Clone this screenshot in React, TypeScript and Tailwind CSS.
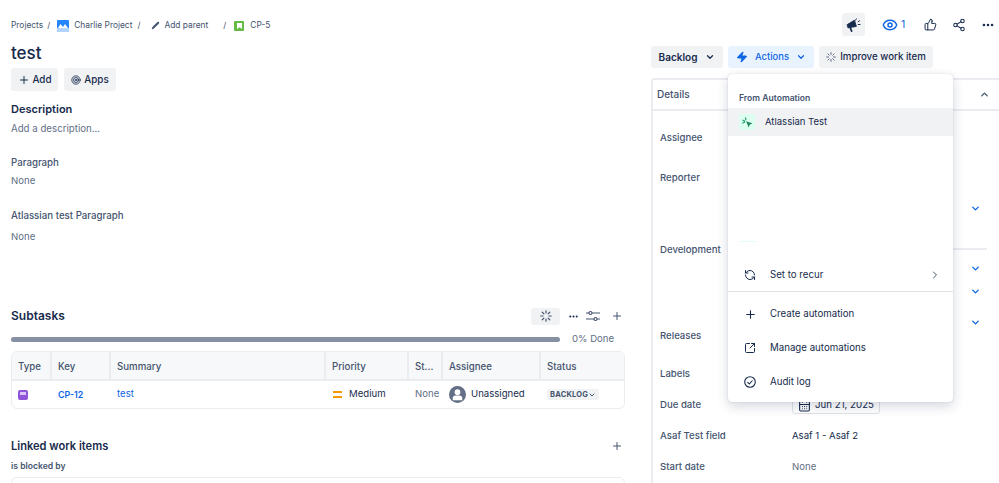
import React from "react";
import { Plus, ChevronDown, ChevronUp, ChevronRight, Eye, ThumbsUp, Share2, MoreHorizontal, Zap, RefreshCcw, SquareArrowOutUpRight, CalendarDays, Pencil, Target } from "lucide-react";

const Spark = ({ size = 12, color = "#44546f" }: { size?: number; color?: string }) => (
  <svg width={size} height={size} viewBox="0 0 16 16" fill="none" stroke={color} strokeWidth="1.6" strokeLinecap="round">
    <path d="M8 1v3M8 12v3M1 8h3M12 8h3M3 3l2.2 2.200M10.800 10.800 13 13M13 3l-2.200 2.200M5.200 10.800 3 13" />
  </svg>
);

const Label = ({ children }: { children: React.ReactNode }) => (
  <div className="text-[9.6px] leading-[14px] font-medium whitespace-nowrap text-[#44546f]">{children}</div>
);

const Row = ({ name, h, value }: { name: string; h: string; value?: React.ReactNode }) => (
  <div className={`grid grid-cols-[132px_1fr] items-start ${h}`}>
    <Label>{name}</Label>
    {value}
  </div>
);

const Th = ({ children, last }: { children: React.ReactNode; last?: boolean }) => (
  <div className={`flex h-full items-center truncate pl-[6px] pt-[3px] text-[9.7px] font-medium text-[#44546f] ${last ? "" : "border-r-2 border-[#ebecf0]"}`}>{children}</div>
);

const MenuItem = ({ icon, label, right, h = "h-[34px]", pt = "" }: { icon: React.ReactNode; label: string; right?: React.ReactNode; h?: string; pt?: string }) => (
  <div className={`flex items-center pl-[16px] pr-[12px] text-[9.7px] text-[#172b4d] ${h}`}>
    <span className="flex w-[26px] items-center text-[#172b4d]">{icon}</span>
    <span className={`flex-1 ${pt}`}>{label}</span>
    {right}
  </div>
);

const Chev = ({ className }: { className: string }) => (
  <ChevronDown size={11} strokeWidth={3} className={`text-[#0c66e4] ${className}`} />
);

export default function App() {
  return (
    <div className="relative h-[483px] w-[999px] overflow-hidden bg-white text-[#172b4d]" style={{ fontFamily: "Inter, 'Noto Sans', sans-serif" }}>
      <div className="flex">
        {/* Left column */}
        <div className="w-[651px] shrink-0 pl-[11px] pr-[26px]">
          <div className="flex h-[50px] items-center pt-[1px] text-[8.4px] text-[#44546f]">
            <span>Projects</span>
            <span className="ml-[4px]">/</span>
            <span className="ml-[7px] flex h-[12px] w-[12px] overflow-hidden rounded-[1px]">
              <svg width="12" height="12" viewBox="0 0 12 12"><rect width="12" height="12" fill="#2684ff" /><path d="M1 8l2.500-4L6 7l2-3 3 4v4H1z" fill="#fff" /><rect y="8" width="12" height="4" fill="#b3d4ff" /></svg>
            </span>
            <span className="ml-[5px]">Charlie Project</span>
            <span className="ml-[5px]">/</span>
            <Pencil size={9} strokeWidth={0} fill="#44546f" className="ml-[11px]" />
            <span className="ml-[4px]">Add parent</span>
            <span className="ml-[15px]">/</span>
            <span className="ml-[8px] flex h-[10px] w-[10px] items-center justify-center rounded-[1px] bg-[#65ba43]">
              <svg width="5" height="6" viewBox="0 0 6 7"><path d="M0 0h6v7L3 5 0 7z" fill="#fff" /></svg>
            </span>
            <span className="ml-[6px]">CP-5</span>
          </div>
          <h1 className="h-[18px] text-[17px] leading-[7px] font-medium text-[#172b4d]">test</h1>
          <div className="flex gap-[6px]">
            <button className="flex h-[23px] w-[47px] items-center justify-center gap-[3px] rounded-[3px] bg-[#f1f2f4] text-[9.8px] font-medium text-[#172b4d]">
              <Plus size={12} /><span className="pt-[1px]">Add</span>
            </button>
            <button className="flex h-[23px] w-[52px] items-center justify-center gap-[3px] rounded-[3px] bg-[#f1f2f4] text-[9.8px] font-medium text-[#172b4d]">
              <Target size={10} /><span className="pt-[1px]">Apps</span>
            </button>
          </div>
          <div className="mt-[11px] text-[11px] leading-[15px] font-semibold">Description</div>
          <div className="mt-[5px] text-[9.7px] leading-[14px] text-[#626f86]">Add a description...</div>

          <div className="mt-[20px] text-[9.7px] leading-[14px] font-medium text-[#44546f]">Paragraph</div>
          <div className="mt-[4px] text-[9.6px] leading-[14px] text-[#626f86]">None</div>
          <div className="mt-[21px] text-[9.7px] leading-[14px] font-medium text-[#44546f]">Atlassian test Paragraph</div>
          <div className="mt-[7px] text-[9.6px] leading-[14px] text-[#626f86]">None</div>

          <div className="mt-[60px] flex h-[24px] items-center">
            <div className="flex-1 text-[12px] font-semibold">Subtasks</div>
            <div className="flex h-[17px] w-[29px] items-center justify-center rounded-[3px] bg-[#f1f2f4]"><Spark size={12} /></div>
            <MoreHorizontal size={11} strokeWidth={2.5} className="ml-[8px]" />
            <svg width="14" height="12" viewBox="0 0 14 12" fill="none" stroke="#44546f" strokeWidth="1.200" className="ml-[7px]">
              <path d="M0 3h3M6 3h8M0 9h8M11 9h3" /><circle cx="4.500" cy="3" r="1.500" /><circle cx="9.500" cy="9" r="1.500" />
            </svg>
            <Plus size={12} className="ml-[11px] mr-[2px] text-[#44546f]" />
          </div>
          <div className="mt-[6px] flex h-[10px] items-center">
            <div className="h-[5px] w-[549px] rounded-full bg-[#8590a2]" />
            <div className="ml-[12px] text-[9.600px] text-[#626f86]">0% Done</div>
          </div>
          <div className="mt-[7px] h-[58px] overflow-hidden rounded-[6px] border border-[#ebecf0] text-[9.600px]">
            <div className="grid h-[29px] grid-cols-[40px_59px_215px_83px_34px_98px_1fr] items-center border-b-2 border-[#ebecf0] bg-[#f7f8f9]">
              <Th>Type</Th><Th>Key</Th><Th>Summary</Th><Th>Priority</Th><Th>St...</Th><Th>Assignee</Th><Th last>Status</Th>
            </div>
            <div className="grid h-[27px] grid-cols-[40px_59px_215px_83px_34px_98px_1fr] items-center">
              <div className="pl-[6px]">
                <div className="flex h-[10px] w-[10px] items-start justify-center rounded-[2px] bg-[#8f55d8] pt-[2px]"><div className="h-[3px] w-[6px] bg-[#d9c5f5]" /></div>
              </div>
              <div className="pl-[6px] text-[8.800px] font-semibold text-[#0c66e4]">CP-12</div>
              <div className="pl-[6px] text-[#0c66e4]">test</div>
              <div className="flex items-center pl-[7px]">
                <div className="flex h-[7px] w-[9px] flex-col justify-between"><div className="h-[2px] bg-[#f79a00]" /><div className="h-[2px] bg-[#f79a00]" /></div>
                <span className="ml-[7px] text-[#172b4d]">Medium</span>
              </div>
              <div className="pl-[6px] text-[#626f86]">None</div>
              <div className="flex items-center pl-[6px]">
                <svg width="17" height="17" viewBox="0 0 18 18"><circle cx="9" cy="9" r="9" fill="#626f86" /><circle cx="9" cy="6.500" r="3" fill="#fff" /><path d="M4 15v-2a3 3 0 0 1 3-3h4a3 3 0 0 1 3 3v2z" fill="#fff" /></svg>
                <span className="ml-[5px] text-[#172b4d]">Unassigned</span>
              </div>
              <div className="pl-[6px]">
                <div className="flex h-[11px] w-[52px] items-center justify-center rounded-[2px] bg-[#f1f2f4] text-[7.500px] font-bold tracking-[0.2px] text-[#44546f]">BACKLOG<ChevronDown size={8} strokeWidth={3} /></div>
              </div>
            </div>
          </div>
          <div className="mt-[27px] flex h-[20px] items-center">
            <div className="flex-1 text-[11.100px] font-semibold">Linked work items</div>
            <Plus size={12} className="mr-[2px] text-[#44546f]" />
          </div>
          <div className="mt-[3px] text-[8.600px] leading-[14px] font-semibold text-[#44546f]">is blocked by</div>
          <div className="mt-[4px] h-[20px] rounded-[6px] border border-[#ebecf0]" />
        </div>

        {/* Right column */}
        <div className="flex-1">
          <div className="flex h-[46px] items-start pt-[13px]">
            <div className="ml-[191px] flex h-[23px] w-[23px] items-center justify-center rounded-[3px] bg-[#f1f2f4]">
              <svg width="15" height="15" viewBox="0 0 16 16" fill="#172b4d" stroke="#172b4d" strokeWidth="1" strokeLinecap="round">
                <path d="M1.500 8 9 3.500l2 6.500-8.500 1.500z" />
                <path d="M4.500 11.500 6 15" strokeWidth="1.800" />
                <path d="M11 2l-.7 1.500M13 5l1.500-1M13 8h2" fill="none" />
              </svg>
            </div>
            <Eye size={16} strokeWidth={2.2} className="ml-[17px] mt-[4px] text-[#0c66e4]" />
            <span className="ml-[3px] mt-[4px] text-[10.500px] text-[#0c66e4]">1</span>
            <ThumbsUp size={13} strokeWidth={1.8} className="ml-[19px] mt-[5px]" />
            <Share2 size={14} strokeWidth={1.8} className="ml-[15px] mt-[5px]" />
            <MoreHorizontal size={14} strokeWidth={2.5} className="ml-[15px] mt-[5px]" />
          </div>
          <div className="flex h-[22px] gap-[5px]">
            <button className="flex w-[72px] items-center justify-center gap-[8px] rounded-[3px] bg-[#f1f2f4] text-[10px] font-semibold text-[#172b4d]">Backlog<ChevronDown size={10} strokeWidth={3} /></button>
            <button className="flex w-[86px] items-center justify-center gap-[7px] rounded-[3px] bg-[#e9f2ff] text-[9.400px] font-medium text-[#0c66e4]"><Zap size={12} fill="#0c66e4" /><span className="pt-[1px]">Actions</span><ChevronDown size={10} strokeWidth={3} /></button>
            <button className="flex w-[114px] items-center justify-center gap-[4px] rounded-[3px] bg-[#f1f2f4] text-[9.700px] font-medium text-[#172b4d]"><Spark size={10} color="#626f86" /><span className="pt-[1px]">Improve work item</span></button>
          </div>
          <div className="mt-[10px] h-[420px] w-[360px] rounded-t-[3px] border-x-2 border-t-2 border-[#ebecf0]">
            <div className="flex h-[31px] items-center justify-between border-b-2 border-[#ebecf0] pl-[4px] pr-[19px]">
              <span className="text-[10px] font-medium text-[#44546f]">Details</span>
              <ChevronUp size={11} strokeWidth={3} className="text-[#44546f]" />
            </div>
            <div className="pl-[7px] pr-[28px] pt-[20px]">
              <Row name="Assignee" h="h-[40px]" />
              <Row name="Reporter" h="h-[72px]" value={<Chev className="mt-[32px] ml-auto" />} />
              <Row name="Development" h="h-[86px]" value={
                <div className="flex flex-col items-end">
                  <div className="-mr-[6px] mt-[5px] h-[2px] w-[34px] bg-[#ebecf0]" />
                  <Chev className="mt-[13px]" />
                  <Chev className="mt-[12px]" />
                  <Chev className="mt-[20px]" />
                </div>
              } />
              <Row name="Releases" h="h-[38px]" />
              <Row name="Labels" h="h-[31px]" />
              <Row name="Due date" h="h-[31px]" value={
                <div className="-mt-[2px] flex h-[18px] w-[88px] items-center justify-center gap-[4px] rounded-[3px] border border-[#dfe1e6] text-[9.700px] whitespace-nowrap text-[#172b4d]"><CalendarDays size={13} />Jun 21, 2025</div>
              } />
              <Row name="Asaf Test field" h="h-[31px]" value={<div className="text-[9.600px] leading-[14px] text-[#172b4d]">Asaf 1 - Asaf 2</div>} />
              <Row name="Start date" h="h-[31px]" value={<div className="text-[9.600px] leading-[14px] text-[#626f86]">None</div>} />
            </div>
          </div>
        </div>
      </div>

      {/* Actions dropdown */}
      <div className="absolute left-[728px] top-[74px] h-[328px] w-[225px] rounded-[4px] bg-white shadow-[0_4px_12px_rgba(9,30,66,0.18),0_0_1px_rgba(9,30,66,0.3)]">
        <div className="pl-[11px] pt-[18px] text-[8.600px] leading-[13px] font-semibold text-[#44546f]">From Automation</div>
        <div className="mt-[3px] flex h-[28px] items-center bg-[#f1f2f4] pl-[11px] text-[9.500px] text-[#172b4d]">
          <div className="flex h-[16px] w-[16px] items-center justify-center rounded-[2px] bg-[#dcfff1]">
            <svg width="11" height="11" viewBox="0 0 12 12"><path d="M4.500 4.500l7 2.500-3 1.200L7.300 11.500z" fill="#1f845a" /><path d="M1 3.500l2 1M3.800 .8l.4 2M.8 6.500l2-.8" stroke="#22a06b" strokeWidth="1.300" strokeLinecap="round" /></svg>
          </div>
          <span className="ml-[10px] pt-[1px]">Atlassian Test</span>
        </div>
        <div className="ml-[12px] mt-[105px] h-[1px] w-[15px] bg-[#dcfff1]" />
        <div className="mt-[16px]">
          <MenuItem h="h-[33px]" pt="pt-[1px]" icon={<RefreshCcw size={12} />} label="Set to recur" right={<ChevronRight size={12} className="text-[#44546f]" />} />
        </div>
        <div className="border-t border-[#dfe1e6]" />
        <div className="mt-[5px]">
          <MenuItem icon={<Plus size={13} />} label="Create automation" />
          <MenuItem icon={<SquareArrowOutUpRight size={12} />} label="Manage automations" />
          <MenuItem icon={
            <svg width="12" height="12" viewBox="0 0 12 12" fill="none" stroke="currentColor" strokeWidth="1.100"><circle cx="6" cy="6" r="5.300" /><path d="M3.500 6.200 5.300 8l3.200-3.500" /></svg>
          } label="Audit log" />
        </div>
      </div>
    </div>
  );
}
